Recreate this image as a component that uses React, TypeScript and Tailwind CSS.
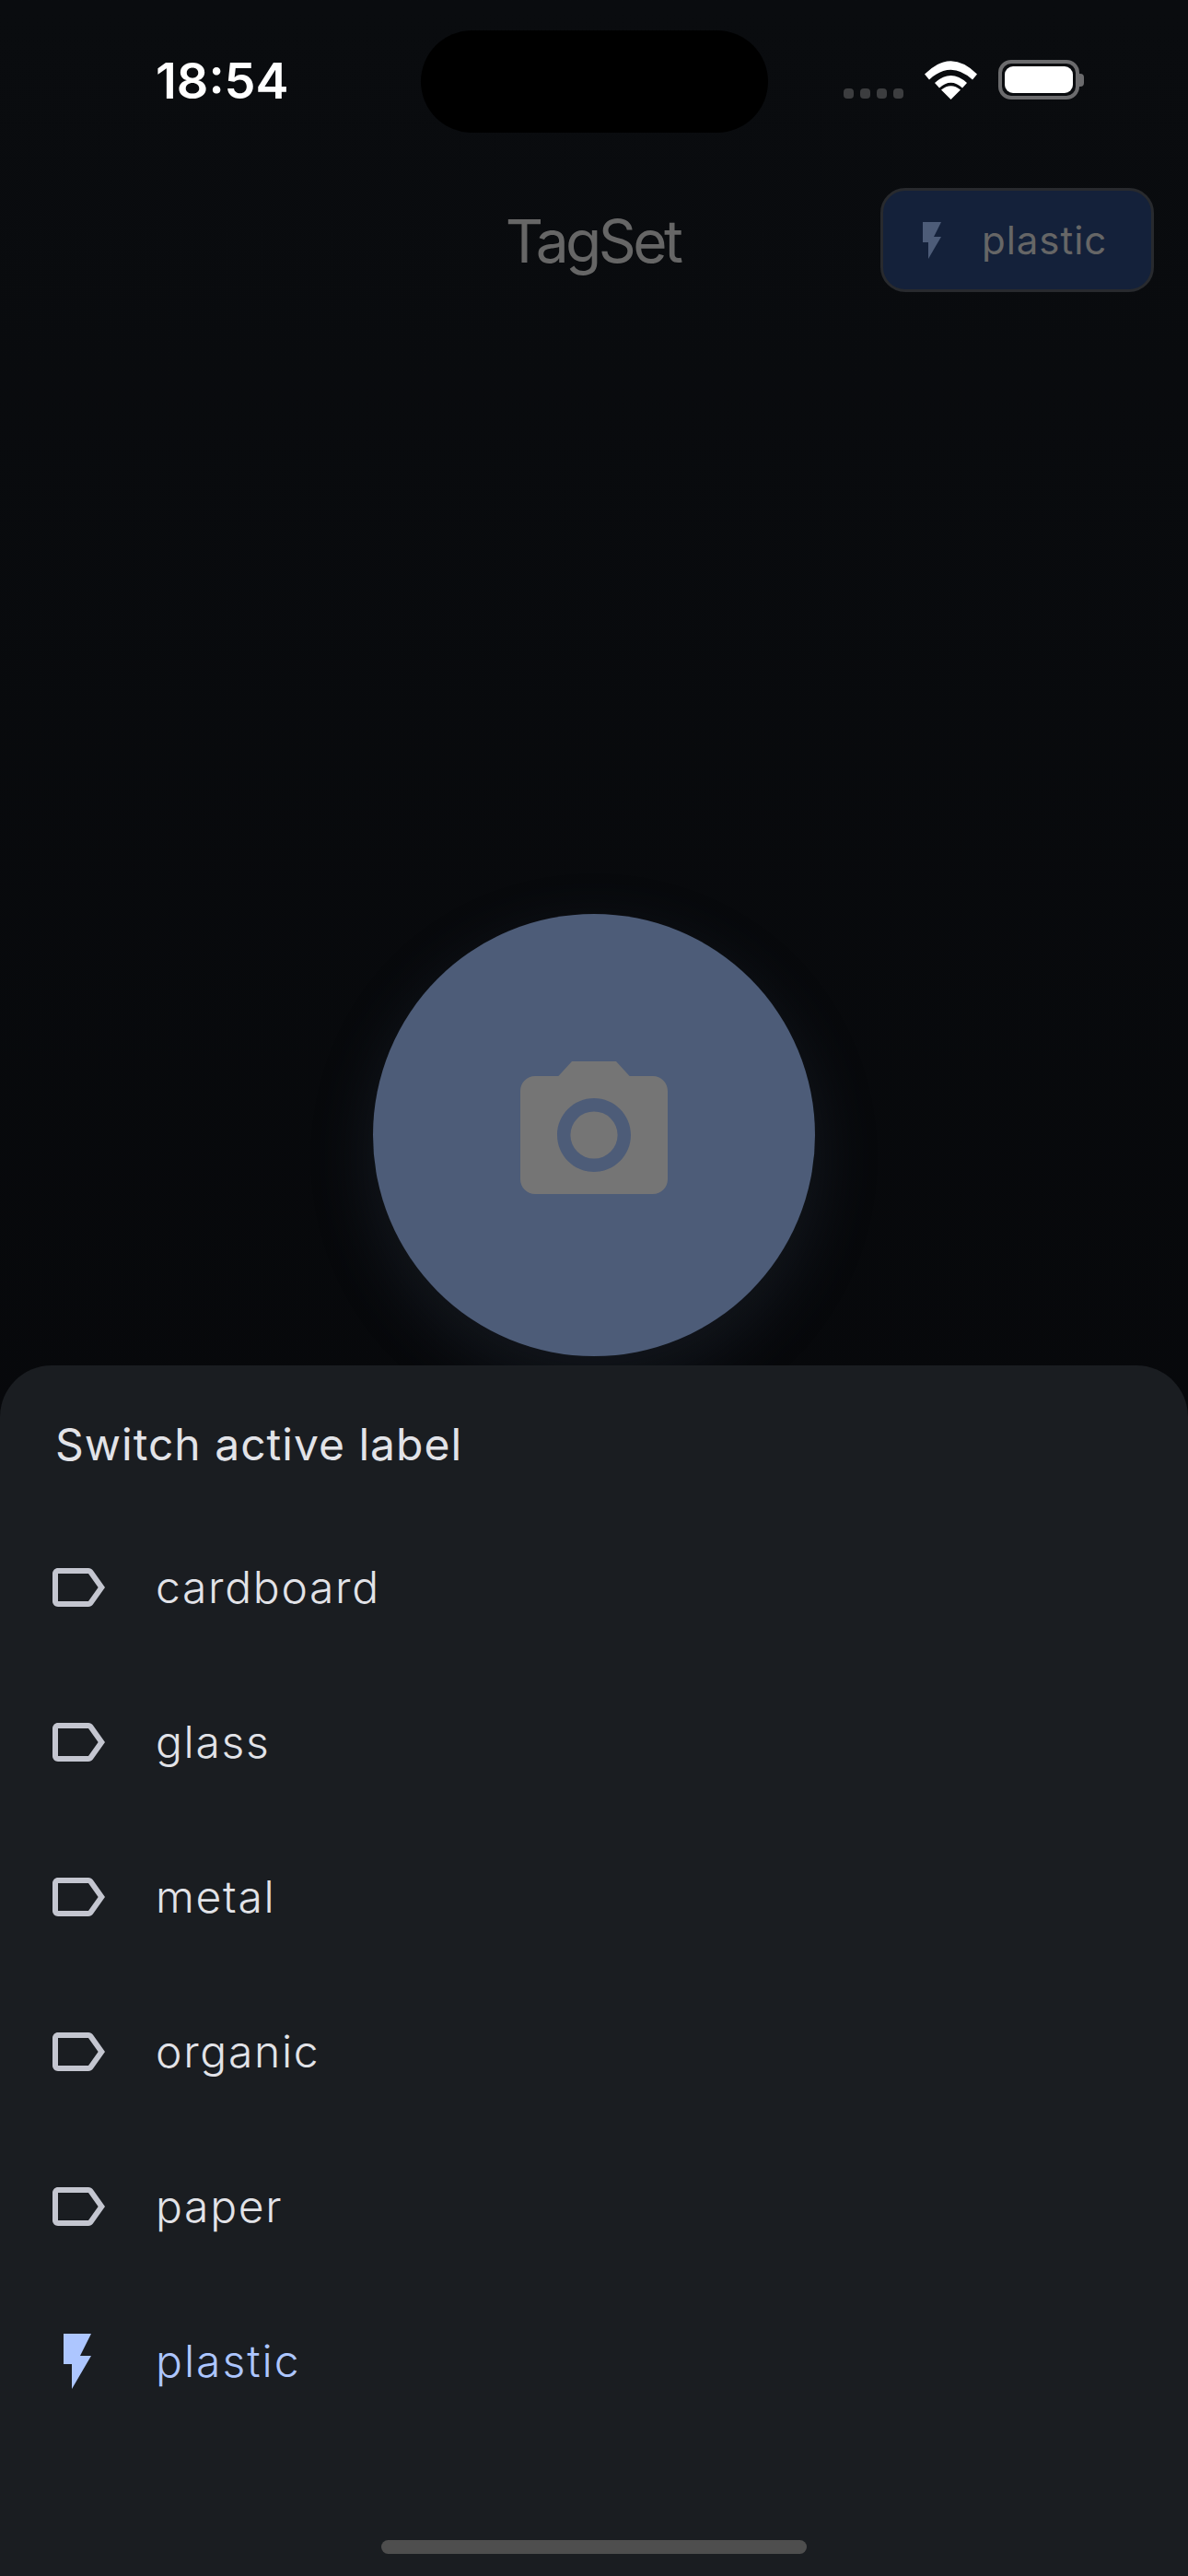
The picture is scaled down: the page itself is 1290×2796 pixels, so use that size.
const labels = ["cardboard", "glass", "metal", "organic", "paper"];

const LabelIcon = () => (
  <svg viewBox="0 0 24 24" className="h-[72px] w-[72px] shrink-0 fill-[#c4c6d0]">
    <path d="M17.63 5.84C17.27 5.33 16.67 5 16 5L5 5.01C3.9 5.01 3 5.9 3 7v10c0 1.1.9 1.99 2 1.99L16 19c.67 0 1.27-.33 1.63-.84L22 12l-4.37-6.16zM16 17H5V7h11l3.55 5L16 17z" />
  </svg>
);

const BoltIcon = ({ className }: { className: string }) => (
  <svg viewBox="0 0 24 24" className={className}>
    <path d="M7 2v11h3v9l7-12h-4l4-8z" />
  </svg>
);

const CameraIcon = () => (
  <svg viewBox="0 0 24 24" className="h-48 w-48 fill-[#757575]">
    <path d="M12 15.2a3.2 3.2 0 1 0 0-6.4 3.2 3.2 0 0 0 0 6.4z" />
    <path d="M9 2 7.17 4H4c-1.1 0-2 .9-2 2v12c0 1.1.9 2 2 2h16c1.1 0 2-.9 2-2V6c0-1.1-.9-2-2-2h-3.17L15 2H9zm3 15c-2.76 0-5-2.24-5-5s2.24-5 5-5 5 2.24 5 5-2.24 5-5 5z" />
  </svg>
);

const StatusIcons = () => (
  <div className="ml-[82px] mt-[65px] flex items-end">
    <div className="mb-[1px] flex gap-[7px]">
      {[0, 1, 2, 3].map((dot) => (
        <div key={dot} className="h-[11px] w-[11px] rounded-[4px] bg-[#3c3d3f]" />
      ))}
    </div>
    <svg viewBox="0 0 57 42" className="ml-[23px] h-[42px] w-[57px] fill-white">
      <path d="M28.5 42 18 31.5Q28.5 23 39 31.5Z" />
      <path d="M11 24l5 5.5Q28.5 18 41 29.5L46 24Q28.5 8 11 24Z" />
      <path d="M0 14.5l5 6Q28.5-1 52 20.5l5-6Q28.5-14 0 14.5Z" />
    </svg>
    <div className="ml-[23px] flex items-center">
      <div className="h-[43px] w-[88px] rounded-[14px] border-[4px] border-[#6b6b6d] p-[3px]">
        <div className="h-full w-full rounded-[9px] bg-white" />
      </div>
      <div className="h-[14px] w-[5px] rounded-r-[4px] bg-[#6b6b6d]" />
    </div>
  </div>
);

export default function App() {
  return (
    <div className="flex h-[2796px] w-[1290px] flex-col overflow-hidden bg-gradient-to-b from-[#0a0c0f] to-[#050608] font-['Inter',sans-serif]">
      <div className="flex h-[1482px] shrink-0 flex-col">
        <div className="flex h-[144px] items-start pl-[169px]">
          <div className="mt-[51px] w-[288px] text-[54px] font-semibold leading-[74px] text-white">
            18:54
          </div>
          <div className="mt-[33px] h-[111px] w-[377px] rounded-full bg-black" />
          <StatusIcons />
        </div>

        <div className="mt-[60px] grid grid-cols-[1fr_auto_1fr] items-center px-[37px]">
          <div />
          <h1 className="mr-[3px] pt-[2px] text-[64px] font-normal leading-[80px] tracking-[-3.6px] text-[#666666]">
            TagSet
          </h1>
          <div className="flex h-[113px] w-[297px] items-center justify-self-end rounded-[27px] border-[3px] border-[#282a2e] bg-[#14213a] pl-[29px]">
            <BoltIcon className="h-12 w-12 shrink-0 fill-[#4d5c78]" />
            <span className="ml-[30px] text-[42px] leading-[60px] tracking-[0.95px] text-[#666666]">
              plastic
            </span>
          </div>
        </div>

        <div className="mt-[675px] flex h-[480px] w-[480px] items-center justify-center self-center rounded-full bg-[#4d5c78] shadow-[0_24px_72px_rgba(77,92,120,0.18)]">
          <CameraIcon />
        </div>
      </div>

      <div className="relative z-10 flex flex-1 flex-col rounded-t-[56px] bg-[#1a1d21] pt-[50px]">
        <h2 className="pl-[60px] text-[48px] font-normal leading-[72px] tracking-[1px] text-[#e2e3e8]">
          Switch active label
        </h2>
        <div className="mt-[35px] flex flex-col">
          {labels.map((label) => (
            <div key={label} className="flex h-[168px] items-center pl-[48px]">
              <LabelIcon />
              <span className="ml-[49px] text-[48px] font-[350] leading-[72px] tracking-[1.7px] text-[#e2e3e8]">
                {label}
              </span>
            </div>
          ))}
          <div className="flex h-[168px] items-center pl-[48px]">
            <BoltIcon className="h-[72px] w-[72px] shrink-0 fill-[#adc6ff]" />
            <span className="ml-[49px] text-[48px] font-[350] leading-[72px] tracking-[2px] text-[#adc6ff]">
              plastic
            </span>
          </div>
        </div>
        <div className="mt-[110px] h-[15px] w-[462px] self-center rounded-full bg-[#4e4e4e]" />
      </div>
    </div>
  );
}
